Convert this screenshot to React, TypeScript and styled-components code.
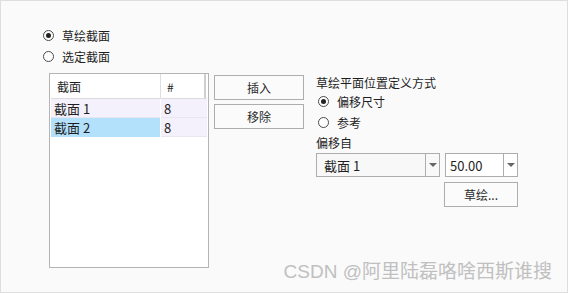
import React, { useState } from 'react';
import styled, { createGlobalStyle } from 'styled-components';

const Global = createGlobalStyle`
  html, body { margin: 0; padding: 0; background: #fafafa; }
  * { box-sizing: border-box; }
`;

const Frame = styled.div`
  position: relative;
  width: 568px;
  height: 293px;
  border: 1px solid #dedede;
  background: #fafafa;
  padding: 24px 0 0 42px;
  font-family: "Noto Sans CJK SC", "Noto Sans", sans-serif;
  font-size: 12px;
  color: #1e1e1e;
`;

const RadioRow = styled.label<{ $indent?: number }>`
  display: flex;
  align-items: center;
  height: 21px;
  gap: 8px;
  padding-left: ${(p) => p.$indent || 0}px;
  cursor: default;
`;

const Circle = styled.span<{ $on: boolean }>`
  width: 11px;
  height: 11px;
  border-radius: 50%;
  border: 1px solid #4a4a4a;
  background: #fff;
  display: flex;
  align-items: center;
  justify-content: center;
  &::after {
    content: '';
    width: 5px;
    height: 5px;
    border-radius: 50%;
    background: ${(p) => (p.$on ? '#222' : 'transparent')};
  }
`;

const Main = styled.div`
  display: flex;
  align-items: flex-start;
  margin: 6px 0 0 6px;
`;

const ListBox = styled.div`
  width: 160px;
  height: 195px;
  border: 1px solid #b4b4b4;
  background: #fff;
  padding: 0 1px;
`;

const Row = styled.div<{ $head?: boolean }>`
  display: grid;
  grid-template-columns: 110px 45px;
  height: ${(p) => (p.$head ? 25 : 19)}px;
  background: ${(p) => (p.$head ? '#fff' : '#f4f1fc')};
  border-bottom: 1px solid ${(p) => (p.$head ? '#dcdcdc' : '#e8e6f0')};
`;

const Cell = styled.div<{ $head?: boolean; $sel?: boolean; $last?: boolean }>`
  display: flex;
  align-items: center;
  padding-left: ${(p) => (p.$head ? 6 : 3)}px;
  background: ${(p) => (p.$sel ? '#b3e1fb' : 'transparent')};
  border-right: ${(p) =>
    p.$head ? (p.$last ? '2px solid #cfcfcf' : '1px solid #dedede') : p.$last ? 'none' : '1px solid #fff'};
  font-size: ${(p) => (p.$head ? 12 : 13)}px;
`;

const Buttons = styled.div`
  display: flex;
  flex-direction: column;
  gap: 4px;
  margin: 2px 0 0 5px;
`;

const Button = styled.button<{ $w: number; $h?: number }>`
  width: ${(p) => p.$w}px;
  height: ${(p) => p.$h || 25}px;
  border: 1px solid #adadad;
  background: #fbfbfb;
  font-family: inherit;
  font-size: 12px;
  color: #2a2a2a;
  padding: 0;
`;

const Panel = styled.div`
  display: flex;
  flex-direction: column;
  margin-left: 12px;
  width: 202px;
`;

const Label = styled.div`
  height: 18px;
  display: flex;
  align-items: center;
`;

const SubLabel = styled(Label)`
  height: 20px;
  align-items: flex-end;
  padding-bottom: 2px;
`;

const Combos = styled.div`
  display: flex;
  gap: 5px;
`;

const Combo = styled.div<{ $w: number; $pad: number; $bg: string }>`
  display: flex;
  width: ${(p) => p.$w}px;
  height: 24px;
  border: 1px solid #adadad;
  background: ${(p) => p.$bg};
  & > span {
    flex: 1;
    display: flex;
    align-items: center;
    padding-left: ${(p) => p.$pad}px;
    font-size: 13px;
  }
`;

const Arrow = styled.div`
  width: 14px;
  border-left: 1px solid #adadad;
  display: flex;
  align-items: center;
  justify-content: center;
  &::after {
    content: '';
    border-left: 4px solid transparent;
    border-right: 4px solid transparent;
    border-top: 4px solid #666;
  }
`;

const SketchRow = styled.div`
  display: flex;
  justify-content: flex-end;
  margin-top: 5px;
`;

const Watermark = styled.div`
  position: absolute;
  right: 15px;
  bottom: 9px;
  font-family: "Liberation Sans", "Noto Sans CJK SC", sans-serif;
  font-size: 19px;
  color: #c0c0c0;
  white-space: nowrap;
`;

export default function App() {
  const [mode, setMode] = useState(0);
  const [offset, setOffset] = useState(0);
  const rows = [
    { name: '截面 1', n: '8' },
    { name: '截面 2', n: '8' },
  ];
  return (
    <>
      <Global />
      <Frame>
        <RadioRow onClick={() => setMode(0)}>
          <Circle $on={mode === 0} />
          草绘截面
        </RadioRow>
        <RadioRow onClick={() => setMode(1)}>
          <Circle $on={mode === 1} />
          选定截面
        </RadioRow>
        <Main>
          <ListBox>
            <Row $head>
              <Cell $head>截面</Cell>
              <Cell $head $last>#</Cell>
            </Row>
            {rows.map((r, i) => (
              <Row key={r.name}>
                <Cell $sel={i === 1}>{r.name}</Cell>
                <Cell $last>{r.n}</Cell>
              </Row>
            ))}
          </ListBox>
          <Buttons>
            <Button $w={90}>插入</Button>
            <Button $w={90}>移除</Button>
          </Buttons>
          <Panel>
            <Label>草绘平面位置定义方式</Label>
            <RadioRow $indent={2} onClick={() => setOffset(0)}>
              <Circle $on={offset === 0} />
              偏移尺寸
            </RadioRow>
            <RadioRow $indent={2} onClick={() => setOffset(1)}>
              <Circle $on={offset === 1} />
              参考
            </RadioRow>
            <SubLabel>偏移自</SubLabel>
            <Combos>
              <Combo $w={124} $pad={7} $bg="#f8f8f8">
                <span>截面 1</span>
                <Arrow />
              </Combo>
              <Combo $w={73} $pad={4} $bg="#fff">
                <span>50.00</span>
                <Arrow />
              </Combo>
            </Combos>
            <SketchRow>
              <Button $w={74}>草绘...</Button>
            </SketchRow>
          </Panel>
        </Main>
        <Watermark>CSDN @阿里陆磊咯啥西斯谁搜</Watermark>
      </Frame>
    </>
  );
}
